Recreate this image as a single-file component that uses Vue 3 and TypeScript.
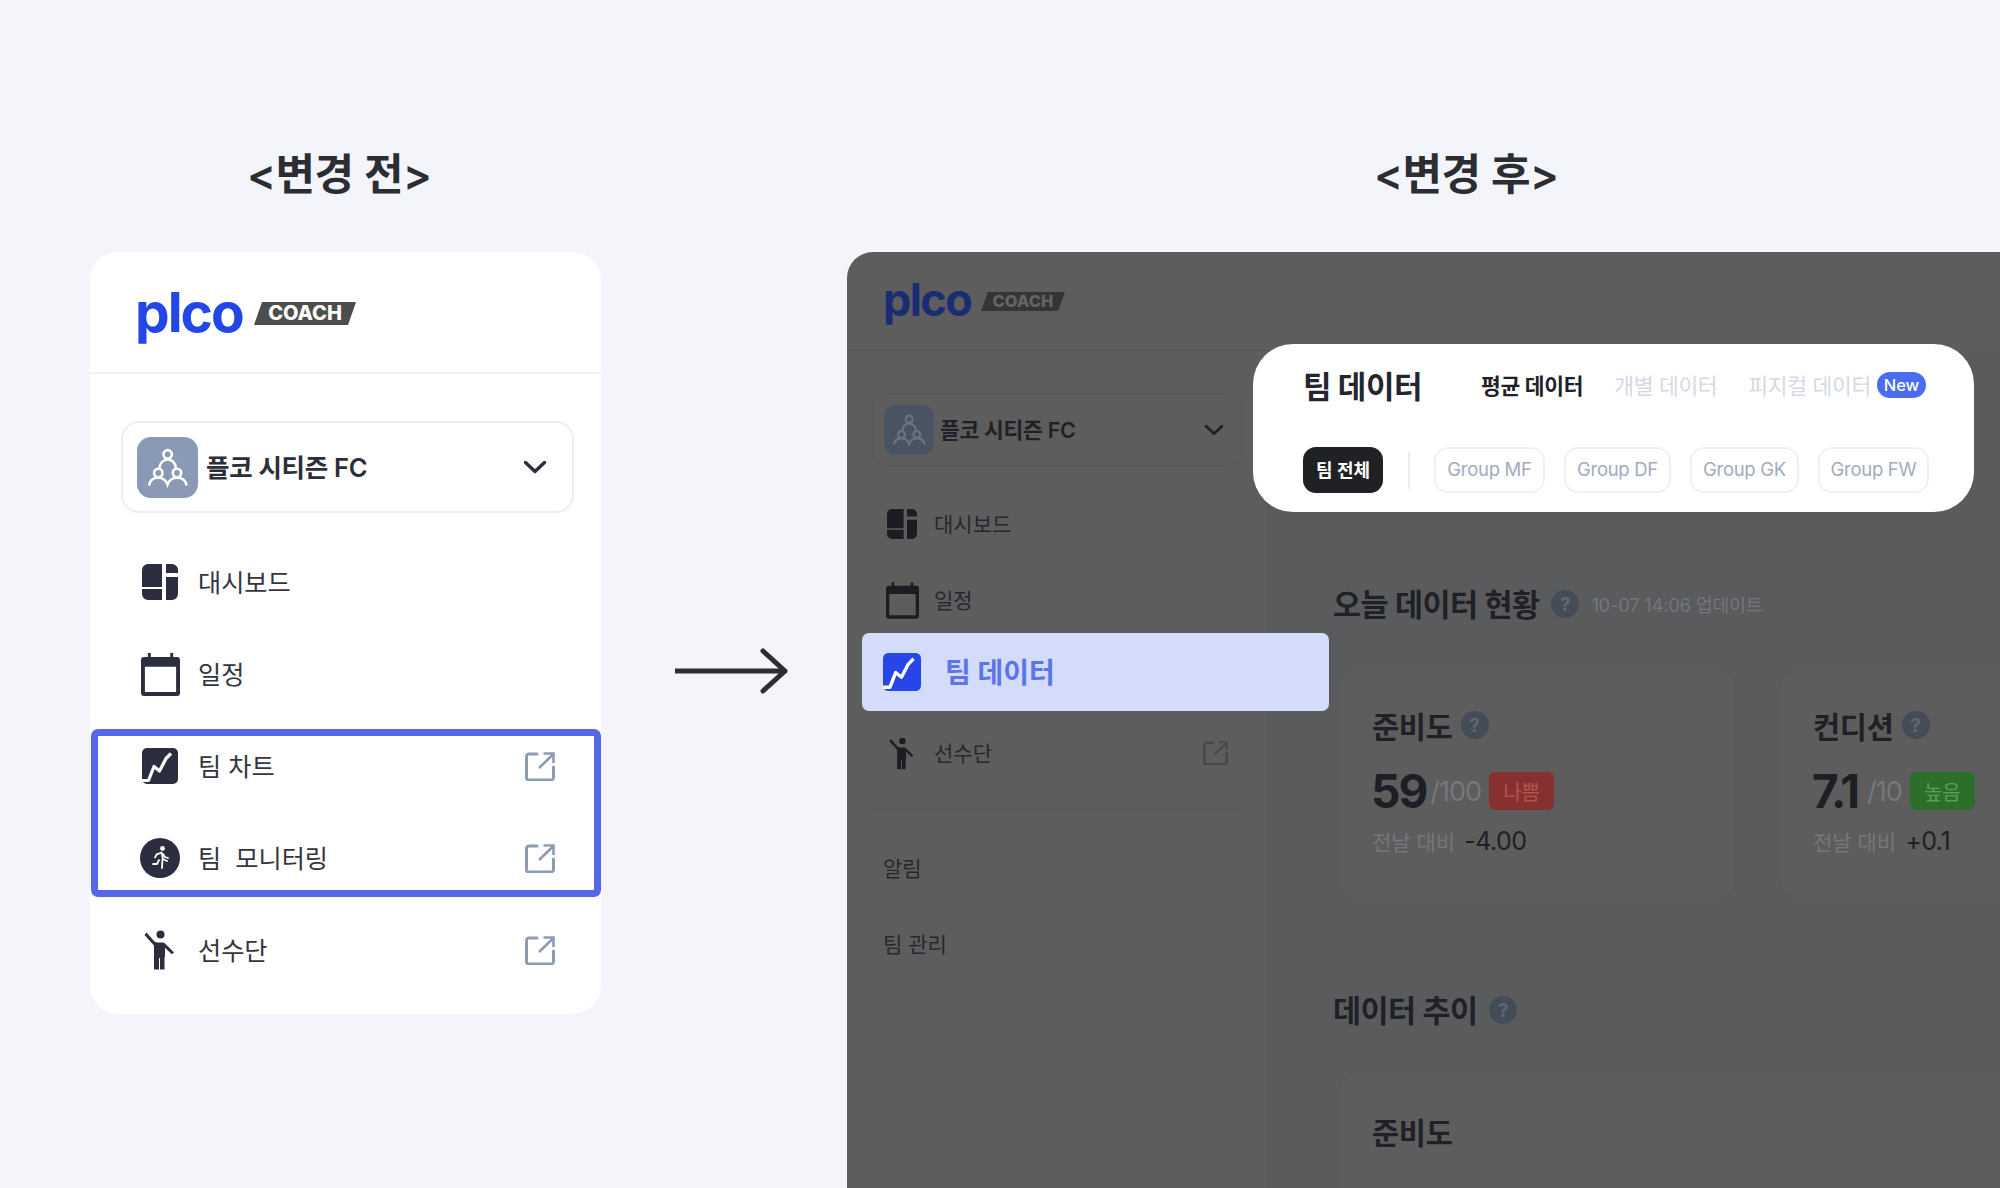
<script setup lang="ts">
interface Row { label: string; icon: string; ext: boolean }
const before: Row[] = [
  { label: '대시보드', icon: 'i-dash', ext: false },
  { label: '일정', icon: 'i-cal', ext: false },
  { label: '팀 차트', icon: 'i-chart', ext: true },
  { label: '팀  모니터링', icon: 'i-run', ext: true },
  { label: '선수단', icon: 'i-player', ext: true },
]
const groups = ['Group MF', 'Group DF', 'Group GK', 'Group FW']
const cards = [
  { name: '준비도', score: '59', max: '/100', tag: '나쁨', tone: 'bad', delta: '-4.00' },
  { name: '컨디션', score: '7.1', max: '/10', tag: '높음', tone: 'good', delta: '+0.1' },
]
</script>

<template>
  <div class="page">
    <svg class="defs" width="0" height="0" aria-hidden="true">
      <symbol id="i-dash" viewBox="0 0 36 36">
        <path d="M6 0h14v23H0V6a6 6 0 0 1 6-6zM0 25h20v11H6a6 6 0 0 1-6-6zM24 0h6a6 6 0 0 1 6 6v3H24zM24 13h12v17a6 6 0 0 1-6 6h-6z" fill="currentColor" />
      </symbol>
      <symbol id="i-cal" viewBox="0 0 40 44">
        <path fill-rule="evenodd" d="M7 0h3v4h20V0h3v4h4a3 3 0 0 1 3 3v34a3 3 0 0 1-3 3H3a3 3 0 0 1-3-3V7a3 3 0 0 1 3-3h4zM4 14v26h32V14z" fill="currentColor" />
      </symbol>
      <symbol id="i-chart" viewBox="0 0 36 36">
        <rect width="36" height="36" rx="5" fill="currentColor" />
        <path d="M0 32.500h6.500L12 18.500l5.500 4.500L24 10.500l5-5" fill="none" stroke="#fff" stroke-width="3.200" stroke-linejoin="round" />
      </symbol>
      <symbol id="i-run" viewBox="0 0 40 40">
        <circle cx="20" cy="20" r="20" fill="currentColor" />
        <circle cx="22.500" cy="10.500" r="2.400" fill="#fff" />
        <path d="M17 16.500l4.500-2 1.500 6.500 4 2M22.500 21l-.5 9M19 22l-2 4h-4M21 15l-4 1-2 3.500M23 16l2 3 3 1" fill="none" stroke="#fff" stroke-width="1.800" stroke-linecap="round" stroke-linejoin="round" />
      </symbol>
      <symbol id="i-player" viewBox="0 0 32 40">
        <circle cx="16.500" cy="4.500" r="4" fill="currentColor" />
        <path d="M2.500 2.500l7.500 8.500a4 4 0 0 0 3 1.500h5c2 0 3 .6 4 2l8 8-2.200 1.800-6.800-6.500V27h-.5v12.500h-4.500V28h-1v11.500H10V15.500L.5 5z" fill="currentColor" />
      </symbol>
      <symbol id="i-ext" viewBox="0 0 30 29">
        <path d="M12 2H4a2.500 2.500 0 0 0-2.500 2.500v21A2.500 2.500 0 0 0 4 28h22a2.500 2.500 0 0 0 2.500-2.500V15" fill="none" stroke="currentColor" stroke-width="3" stroke-linecap="round" />
        <path d="M14 16L28 2.500M18.500 1.500h10V11" fill="none" stroke="currentColor" stroke-width="2.600" />
      </symbol>
      <symbol id="i-team" viewBox="0 0 61 61">
        <g fill="none" stroke="currentColor" stroke-width="2.600" stroke-linecap="round">
          <circle cx="30.700" cy="17.300" r="4.200" />
          <circle cx="21.300" cy="36" r="4.200" />
          <circle cx="40" cy="36" r="4.200" />
          <path d="M22.300 31c1-5.500 4.500-8.500 8.400-8.500S38 25.500 39 31" />
          <path d="M12.300 47.500c.8-4.500 4.500-6.800 9-6.800s7.500 2.300 9.200 6.800c1.700-4.500 5-6.800 9.500-6.800s8.500 2.300 9.300 6.800" />
        </g>
      </symbol>
      <symbol id="i-chev" viewBox="0 0 24 14">
        <path d="M2.500 2.500L12 11.500l9.500-9" fill="none" stroke="currentColor" stroke-width="3.400" stroke-linecap="round" stroke-linejoin="round" />
      </symbol>
    </svg>

    <!-- before -->
    <section class="col-before">
      <h2 class="page-title before-title">&lt;변경 전&gt;</h2>
      <div class="nav-card">
        <div class="brand">
          <span class="logo">plco</span>
          <span class="coach">COACH</span>
        </div>
        <div class="club">
          <span class="club-avatar"><svg class="team"><use href="#i-team" /></svg></span>
          <span class="club-name">플코 시티즌 FC</span>
          <svg class="chev"><use href="#i-chev" /></svg>
        </div>
        <ul class="rows">
          <li v-for="r in before" :key="r.label" class="row">
            <span class="row-icon"><svg :class="r.icon"><use :href="'#' + r.icon" /></svg></span>
            <span class="row-label">{{ r.label }}</span>
            <svg v-if="r.ext" class="ext"><use href="#i-ext" /></svg>
          </li>
        </ul>
        <div class="highlight"></div>
      </div>
    </section>

    <div class="arrow-col">
      <svg width="113" height="46" viewBox="0 0 113 46">
        <path d="M0 23h110M88 3l22 20-22 20" fill="none" stroke="#2c2e33" stroke-width="5" stroke-linecap="round" stroke-linejoin="round" />
      </svg>
    </div>

    <!-- after -->
    <section class="col-after">
      <h2 class="page-title after-title">&lt;변경 후&gt;</h2>
      <div class="panel">
        <div class="d-brand">
          <span class="d-logo">plco</span>
          <span class="d-coach">COACH</span>
        </div>
        <div class="d-body">
          <aside class="d-side">
            <div class="d-club">
              <span class="d-avatar"><svg class="d-team"><use href="#i-team" /></svg></span>
              <span class="d-club-name">플코 시티즌 FC</span>
              <svg class="d-chev"><use href="#i-chev" /></svg>
            </div>
            <div class="d-row">
              <span class="d-icon"><svg class="d-i-dash"><use href="#i-dash" /></svg></span>
              <span class="lbl">대시보드</span>
            </div>
            <div class="d-row">
              <span class="d-icon"><svg class="d-i-cal"><use href="#i-cal" /></svg></span>
              <span class="lbl">일정</span>
            </div>
            <div class="active-row">
              <svg class="a-icon"><use href="#i-chart" /></svg>
              <span class="lbl">팀 데이터</span>
            </div>
            <div class="d-row after-active">
              <span class="d-icon"><svg class="d-i-player"><use href="#i-player" /></svg></span>
              <span class="lbl">선수단</span>
              <svg class="d-ext"><use href="#i-ext" /></svg>
            </div>
            <div class="d-divider"></div>
            <div class="d-row plain"><span class="lbl">알림</span></div>
            <div class="d-row plain"><span class="lbl">팀 관리</span></div>
          </aside>

          <main class="d-main">
            <div class="d-head">
              <h3>오늘 데이터 현황</h3>
              <span class="help">?</span>
              <span class="updated">10-07 14:06 업데이트</span>
            </div>
            <div class="d-cards">
              <article v-for="c in cards" :key="c.name" class="d-card">
                <div class="d-card-title">
                  <h4>{{ c.name }}</h4>
                  <span class="help">?</span>
                </div>
                <div class="score-line" :class="c.tone">
                  <strong>{{ c.score }}</strong>
                  <span class="max">{{ c.max }}</span>
                  <span class="tag">{{ c.tag }}</span>
                </div>
                <div class="delta"><span>전날 대비</span><b>{{ c.delta }}</b></div>
              </article>
            </div>
            <div class="d-head second">
              <h3>데이터 추이</h3>
              <span class="help">?</span>
            </div>
            <article class="d-wide"><h4>준비도</h4></article>
          </main>
        </div>

        <div class="popup">
          <div class="popup-top">
            <h3>팀 데이터</h3>
            <nav class="tabs">
              <span class="tab on">평균 데이터</span>
              <span class="tab">개별 데이터</span>
              <span class="tab">피지컬 데이터</span>
              <span class="new">New</span>
            </nav>
          </div>
          <div class="chips">
            <span class="chip-all">팀 전체</span>
            <span class="chip-sep"></span>
            <span v-for="g in groups" :key="g" class="chip">{{ g }}</span>
          </div>
        </div>
      </div>
    </section>
  </div>
</template>

<style>
html, body { margin: 0; background: #f3f5fa; }
</style>

<style scoped>
* { box-sizing: border-box; }
h2, h3, h4, ul { margin: 0; padding: 0; list-style: none; font-weight: inherit; font-size: inherit; }
.page {
  width: 2000px; height: 1188px; overflow: hidden; display: flex; padding-left: 90px;
  background: #f3f5fa; color: #2c2e38;
  font-family: Inter, "Noto Sans CJK KR", sans-serif;
}
.defs { position: absolute; }
.page-title {
  height: 252px; padding-top: 145px; font-size: 43px; line-height: 58px; font-weight: 600;
  color: #2b2d33; white-space: nowrap; letter-spacing: -0.5px;
}
.col-before { width: 510px; flex: none; }
.before-title { padding-left: 157px; }
.nav-card {
  position: relative; width: 511px; height: 762px; background: #fff; border-radius: 28px;
}
.brand {
  height: 122px; padding-left: 45px; display: flex; align-items: flex-start; gap: 12px;
  border-bottom: 2px solid #eff1f5;
}
.logo {
  font-size: 55px; line-height: 54px; font-weight: 700; color: #2346e6; letter-spacing: -2px;
  margin-top: 33px; width: 107px; flex: none;
}
.coach {
  width: 102px; height: 23px; margin-top: 50px; background: #4d4d4d; color: #fff;
  clip-path: polygon(8px 0, 100% 0, 94px 100%, 0 100%);
  font-size: 20px; line-height: 23px; font-weight: 800; text-align: center; flex: none;
}
.club {
  width: 453px; height: 92px; margin: 47px 0 23px 31px; padding: 0 25px 0 14px;
  display: flex; align-items: center; border: 2px solid #eceef3; border-radius: 18px;
}
.club-avatar {
  width: 61px; height: 61px; border-radius: 14px; background: #8a9ab5; color: #fff; flex: none;
}
.team { width: 61px; height: 61px; display: block; }
.club-name { margin-left: 8px; padding-bottom: 3px; font-size: 25.500px; font-weight: 600; flex: 1; white-space: nowrap; letter-spacing: -0.3px; }
.chev { width: 24px; height: 14px; color: #2c2e38; }
.row { height: 92px; padding: 0 46px 0 50px; display: flex; align-items: center; }
.row-icon { width: 40px; height: 44px; display: flex; align-items: center; justify-content: center; color: #2c2e3f; flex: none; }
.i-dash, .i-chart { width: 36px; height: 36px; }
.i-cal { width: 39px; height: 43px; }
.i-run { width: 40px; height: 40px; }
.i-player { width: 32px; height: 40px; }
.row-label { margin-left: 18px; padding-bottom: 3px; font-size: 25.200px; flex: 1; white-space: pre; color: #33353f; }
.ext { width: 30px; height: 29px; color: #8e9bb5; }
.highlight {
  position: absolute; left: 1px; top: 477px; width: 510px; height: 168px;
  border: 7px solid #5468e8; border-radius: 7px;
}

.arrow-col { width: 113px; flex: none; margin: 648px 59px 0 75px; height: 46px; }

.col-after { width: 1153px; flex: none; }
.after-title { padding-left: 527px; }
.panel {
  position: relative; width: 1153px; height: 936px; background: #5d5d5d; border-top-left-radius: 26px; overflow: hidden;
  display: flex; flex-direction: column;
}
.d-brand {
  height: 99px; flex: none; padding-left: 36px; display: flex; align-items: flex-start; gap: 11px;
  border-bottom: 1px solid #595959;
}
.d-logo { font-size: 45px; line-height: 44px; font-weight: 700; color: #1a2c74; letter-spacing: -1.600px; width: 87px; margin-top: 26px; flex: none; }
.d-coach {
  width: 84px; height: 19px; margin-top: 40px; background: #353535; color: #646464; flex: none;
  clip-path: polygon(7px 0, 100% 0, 77px 100%, 0 100%);
  font-size: 16.500px; line-height: 19px; font-weight: 800; text-align: center;
}
.d-body { flex: 1; display: flex; min-height: 0; }
.d-side { width: 421px; flex: none; padding: 42px 25px 0; position: relative; z-index: 2; color: #232429; }
.d-club {
  height: 73px; padding: 0 18px 0 11px; display: flex; align-items: center;
  border: 1px solid #595959; border-radius: 14px; margin-bottom: 20px;
}
.d-avatar { width: 50px; height: 50px; border-radius: 12px; background: #4a5361; color: #6c7480; flex: none; }
.d-team { width: 50px; height: 50px; display: block; }
.d-club-name { margin-left: 6px; padding-bottom: 3px; flex: 1; font-size: 21.500px; font-weight: 600; letter-spacing: -0.3px; color: #202126; }
.d-chev { width: 20px; height: 12px; color: #202126; }
.d-row { height: 76px; display: flex; align-items: center; padding: 0 15px 0 11px; font-size: 21px; color: #262830; }
.d-icon { width: 38px; height: 38px; display: flex; align-items: center; justify-content: center; color: #1c1d22; margin-right: 13px; flex: none; }
.d-i-dash { width: 30px; height: 30px; }
.d-i-cal { width: 33px; height: 37px; }
.d-i-player { width: 26px; height: 33px; }
.lbl { padding-bottom: 2px; }
.d-row > .lbl { flex: 1; }
.d-ext { width: 25px; height: 24px; color: #45484f; }
.plain { padding-left: 11px; }
.active-row {
  width: 467px; height: 78px; margin: -5px 0 0 -10px; padding-left: 21px;
  display: flex; align-items: center; gap: 24px; background: #d4dcfc; border-radius: 7px;
  color: #5b75e8; font-size: 28px; font-weight: 700; position: relative;
}
.a-icon { width: 38px; height: 38px; color: #2846e8; }
.after-active { margin-top: 4px; }
.d-divider { height: 1px; background: #575757; margin: 19px 0 19px; }

.d-main { flex: 1; min-width: 0; background: #5a5b5d; padding: 235px 0 0 69px; overflow: hidden; border-left: 1px solid #585859; color: #232429; }
.d-head { display: flex; align-items: center; height: 36px; margin-left: -5px; white-space: nowrap; }
.d-head h3 { font-size: 30.500px; font-weight: 600; letter-spacing: -0.6px; color: #202126; padding-bottom: 2px; }
.help {
  width: 28px; height: 28px; border-radius: 50%; background: #444c57; color: #5f6772; flex: none;
  display: flex; align-items: center; justify-content: center; font-size: 19px; font-weight: 700; margin-left: 12px;
}
.updated { margin-left: 12px; font-size: 18.500px; color: #73767a; letter-spacing: -0.3px; }
.d-cards { display: flex; gap: 43px; margin-top: 46px; width: 900px; }
.d-card { width: 398px; height: 232px; flex: none; background: #5d5d5d; border: 1px solid #5a5a5b; border-radius: 20px; padding: 38px 0 0 33px; }
.d-card-title { display: flex; align-items: center; height: 36px; }
.d-card-title h4, .d-wide h4 { font-size: 29.500px; font-weight: 600; color: #202126; letter-spacing: -0.3px; }
.d-card-title .help { margin-left: 8px; }
.score-line { display: flex; align-items: center; height: 50px; margin-top: 23px; }
.score-line strong { font-size: 46px; font-weight: 700; letter-spacing: -2px; color: #1e1f24; margin-left: -1px; }
.max { margin-left: 4px; font-size: 27px; color: #75787c; letter-spacing: -1px; }
.good .max { margin-left: 9px; }
.tag { margin-left: 8px; width: 65px; height: 38px; border-radius: 6px; display: flex; align-items: center; justify-content: center; font-size: 20px; }
.bad .tag { background: #873030; color: #b0554f; }
.good .tag { background: #2e6e2c; color: #58a050; }
.delta { margin-top: 7px; display: flex; align-items: center; gap: 9px; height: 36px; font-size: 21px; color: #74777b; }
.delta b { font-weight: 400; font-size: 25px; color: #1f2025; letter-spacing: -0.5px; }
.second { margin-top: 92px; }
.d-wide { margin-top: 45px; width: 1000px; height: 300px; background: #5d5d5d; border: 1px solid #5a5a5b; border-radius: 20px; padding: 41px 0 0 33px; }
.d-wide h4 { line-height: 36px; }

.popup {
  position: absolute; left: 406px; top: 92px; width: 721px; height: 168px; z-index: 3;
  background: #fff; border-radius: 40px; padding: 17px 0 0 50px;
}
.popup-top { display: flex; align-items: center; height: 46px; white-space: nowrap; }
.popup-top h3 { font-size: 31px; font-weight: 700; color: #23252f; letter-spacing: -0.5px; width: 178px; flex: none; }
.tabs { display: flex; align-items: center; }
.tab { font-size: 21.500px; font-weight: 400; color: #d4d9e5; margin-right: 31px; letter-spacing: -0.3px; }
.tab.on { color: #1f2028; font-weight: 700; }
.tab:nth-child(3) { margin-right: 6px; }
.new { width: 49px; height: 26px; margin-top: 2px; border-radius: 13px; background: #4a6cf0; color: #fff; font-size: 16.500px; line-height: 26px; text-align: center; font-weight: 500; }
.chips { display: flex; align-items: center; margin-top: 40px; }
.chip-all { width: 80px; height: 46px; padding-bottom: 2px; border-radius: 13px; background: #202124; color: #fff; font-size: 18px; font-weight: 600; display: flex; align-items: center; justify-content: center; }
.chip-sep { width: 2px; height: 37px; background: #e9ebf0; margin: 0 24px 0 25px; }
.chip {
  width: 111px; height: 46px; padding-bottom: 2px; border: 2px solid #f0f1f5; border-radius: 14px; margin-right: 19px;
  display: flex; align-items: center; justify-content: center; font-size: 18.500px; color: #a2abc0; letter-spacing: -0.3px;
}
.chip:nth-child(4) { width: 107px; }
.chip:nth-child(5) { width: 109px; }
</style>
